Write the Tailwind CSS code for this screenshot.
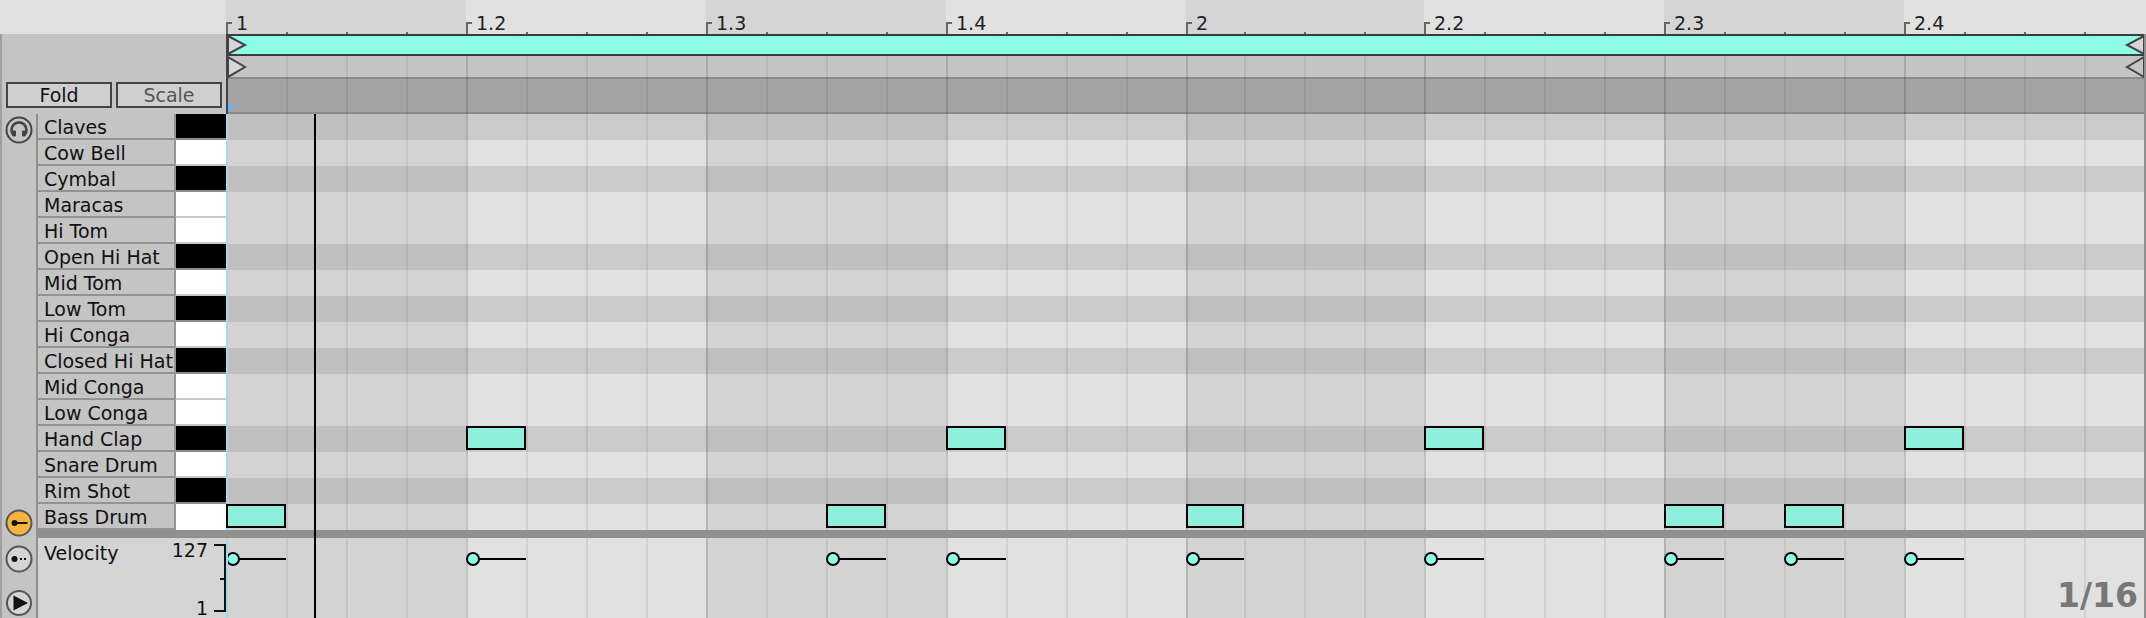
<!DOCTYPE html>
<html lang="en">
<head>
  <meta charset="UTF-8" />
  <title>Drum Rack MIDI clip</title>
  <script src="https://cdn.jsdelivr.net/npm/@tailwindcss/browser@4"></script>
</head>
<body class="bg-[#c4c4c4]">
  <div class="relative w-[2146px] h-[618px] overflow-hidden flex flex-col font-['DejaVu_Sans',sans-serif] text-[#111]">

    <!-- ruler -->
    <div class="flex h-[34px] bg-[#e1e1e1]">
      <div class="w-[226px] shrink-0"></div>
      <div id="ruler" class="relative flex-1"></div>
    </div>

    <!-- loop strips + fold/scale -->
    <div class="flex h-[80px]">
      <div class="w-[226px] shrink-0 border-l-2 border-[#a0a0a0] bg-[#c4c4c4] flex items-end gap-[4px] pl-[4px] pb-[6px]">
        <button class="w-[106px] h-[26px] border-2 border-[#444] bg-[#cfcfcf] text-[19px] leading-[22px] text-[#111]">Fold</button>
        <button class="w-[106px] h-[26px] border-2 border-[#444] bg-[#cfcfcf] text-[19px] leading-[22px] text-[#555]">Scale</button>
      </div>
      <div class="relative flex-1 flex flex-col border-l-2 border-[#444]">
        <div class="relative h-[22px] bg-[#8dffe9] border-y-2 border-[#3d3d3d]"></div>
        <div class="h-[21px] bg-[#c5c5c5]"></div>
        <div class="h-[37px] bg-[#a3a3a3] border-y-2 border-[#8a8a8a]"></div>
        <div id="stripLines" class="absolute inset-0 -left-[2px]"></div>
        <svg class="absolute left-0 top-0" width="24" height="46" viewBox="0 0 24 46">
          <path d="M0 2 L17 11 L0 20 Z" fill="#d6d6d6" stroke="#444" stroke-width="2"/>
          <path d="M0 23 L17 33 L0 43 Z" fill="#d6d6d6" stroke="#444" stroke-width="2"/>
        </svg>
        <svg class="absolute right-0 top-0" width="24" height="46" viewBox="0 0 24 46">
          <path d="M22 2 L5 11 L22 20 Z" fill="#d6d6d6" stroke="#444" stroke-width="2"/>
          <path d="M22 23 L5 33 L22 43 Z" fill="#c5c5c5" stroke="#444" stroke-width="2"/>
        </svg>
        <svg class="absolute left-0 bottom-[2px]" width="8" height="8" viewBox="0 0 8 8">
          <path d="M0 0 H7 L0 8 Z" fill="#5cb8f5"/>
        </svg>
      </div>
    </div>

    <!-- note rows -->
    <div class="flex h-[416px]">
      <div class="w-[38px] shrink-0 border-l-2 border-r-2 border-[#a0a0a0] border-r-[#909090] bg-[#c4c4c4] relative">
        <svg class="absolute left-[3px] top-[2px]" width="28" height="28" viewBox="0 0 28 28" fill="none" stroke="#444">
          <circle cx="14" cy="14" r="12.5" stroke-width="2"/>
          <path d="M8.5 19 A7.5 7.5 0 1 1 19.5 19" stroke-width="2.6"/>
          <rect x="7.5" y="14.5" width="3.5" height="6" rx="1" fill="#444" stroke="none"/>
          <rect x="17" y="14.5" width="3.5" height="6" rx="1" fill="#444" stroke="none"/>
        </svg>
        <svg class="absolute left-[3px] bottom-[-7px]" width="28" height="28" viewBox="0 0 28 28">
          <circle cx="14" cy="14" r="12.5" fill="#f7b23f" stroke="#555" stroke-width="2"/>
          <circle cx="9.5" cy="14" r="3" fill="#111"/>
          <rect x="9.5" y="13" width="13" height="2" fill="#111"/>
        </svg>
      </div>
      <div id="names" class="w-[188px] shrink-0 flex flex-col"></div>
      <div class="relative flex-1">
        <div id="rows" class="flex flex-col h-full"></div>
        <div id="rowOverlay" class="absolute inset-0"></div>
        <div id="notes" class="absolute inset-0"></div>
      </div>
    </div>

    <div class="flex h-[8px]">
      <div class="w-[36px] shrink-0 border-l-2 border-[#a0a0a0] bg-[#c4c4c4]"></div>
      <div class="flex-1 bg-[#909090]"></div>
    </div>

    <!-- velocity lane -->
    <div class="flex flex-1">
      <div class="w-[38px] shrink-0 border-l-2 border-r-2 border-[#a0a0a0] border-r-[#909090] bg-[#c4c4c4] relative">
        <svg class="absolute left-[3px] top-[7px]" width="28" height="28" viewBox="0 0 28 28">
          <circle cx="14" cy="14" r="12.5" fill="#d4d4d4" stroke="#555" stroke-width="2"/>
          <circle cx="9.5" cy="14" r="3" fill="#111"/>
          <rect x="15" y="13" width="2" height="2" fill="#111"/>
          <rect x="19" y="13" width="2" height="2" fill="#111"/>
        </svg>
        <svg class="absolute left-[3px] top-[51px]" width="28" height="28" viewBox="0 0 28 28">
          <circle cx="14" cy="14" r="12" fill="#d4d4d4" stroke="#555" stroke-width="2"/>
          <path d="M8.5 6.5 L23 14 L8.5 21.5 Z" fill="#111"/>
        </svg>
      </div>
      <div class="relative w-[188px] shrink-0 bg-[#d4d4d4] text-[19px]">
        <div class="pl-[6px] pt-[3px] leading-[24px]">Velocity</div>
        <div class="absolute right-[18px] top-[1px] leading-[22px]">127</div>
        <div class="absolute right-[18px] bottom-[-1px] leading-[22px]">1</div>
        <div class="absolute right-0 top-[6px] w-[12px] h-[68px] border-t-2 border-b-2 border-r-2 border-[#111]"></div>
        <div class="absolute right-0 top-[40px] w-[6px] h-[2px] bg-[#111]"></div>
      </div>
      <div class="relative flex-1 bg-[#e1e1e1]">
        <div id="velOverlay" class="absolute inset-0"></div>
        <div id="velocity" class="absolute inset-0"></div>
        <div class="absolute left-0 top-0 bottom-0 w-[2px] bg-[#9fd8f8]"></div>
      </div>
    </div>

    <div class="absolute right-[8px] bottom-[6px] text-[33px] leading-[33px] font-bold text-[#777]">1/16</div>

    <!-- right edge + playhead -->
    <div class="absolute right-0 top-[34px] bottom-0 w-[2px] bg-[#909090]"></div>
    <div class="absolute left-[314px] top-[114px] bottom-0 w-[2px] bg-black"></div>
  </div>

<script>
  const names = ["Claves","Cow Bell","Cymbal","Maracas","Hi Tom","Open Hi Hat","Mid Tom","Low Tom","Hi Conga","Closed Hi Hat","Mid Conga","Low Conga","Hand Clap","Snare Drum","Rim Shot","Bass Drum"];
  const blackRows = [0,2,5,7,9,12,14];
  const notes = [[15,0],[12,4],[15,10],[12,12],[15,16],[12,20],[15,24],[15,26],[12,28]];
  const labels = ["1","1.2","1.3","1.4","2","2.2","2.3","2.4"];

  // the grid loses 2px after the second bar starts
  const pos = n => (n <= 16 ? n * 60 : n * 60 - 2);

  let nameHtml = "", rowHtml = "";
  names.forEach((name, i) => {
    const last = i === names.length - 1;
    const black = blackRows.includes(i);
    nameHtml += `
      <div class="h-[26px] flex">
        <div class="w-[136px] bg-[#c4c4c4] border-b-2 border-[#939393] pl-[6px] text-[19px] leading-[26px] whitespace-nowrap overflow-hidden">${name}</div>
        <div class="w-[2px] bg-[#939393]"></div>
        <div class="w-[50px] flex flex-col ${black ? "bg-[#8c8c8c]" : "bg-[#c8c8c8]"}"><div class="${black ? "bg-black" : "bg-white"} ${last ? "h-[26px]" : "h-[24px]"}"></div></div>
      </div>`;
    rowHtml += `<div class="h-[26px] ${black ? "bg-[#cbcbcb]" : "bg-[#e1e1e1]"}"></div>`;
  });
  document.getElementById("names").innerHTML = nameHtml;
  document.getElementById("rows").innerHTML = rowHtml;

  // bar shading and sixteenth lines
  function lines(from, topClass) {
    let html = "";
    for (let n = from; n < 32; n++) {
      const lineClass = n % 4 === 0 ? "bg-black/[0.14]" : "bg-black/[0.07]";
      html += `<div class="absolute ${topClass} bottom-0 w-[2px] ${lineClass}" style="left:${pos(n)}px"></div>`;
    }
    return html;
  }
  function shade(colorClass) {
    let html = "";
    for (let n = 0; n < 32; n += 8) {
      html += `<div class="absolute top-0 bottom-0 ${colorClass}" style="left:${pos(n)}px;width:${pos(n + 4) - pos(n)}px"></div>`;
    }
    return html;
  }
  document.getElementById("rowOverlay").innerHTML = shade("bg-black/[0.06]") + lines(1, "top-0") + '<div class="absolute left-0 top-0 bottom-0 w-[2px] bg-[#9fd8f8]"></div>';
  document.getElementById("velOverlay").innerHTML = shade("bg-black/[0.06]") + lines(1, "top-0");
  document.getElementById("stripLines").innerHTML = lines(1, "top-[22px]");

  // ruler
  let ruler = shade("bg-[#d5d5d5]");
  for (let n = 0; n < 32; n++) {
    const x = pos(n);
    if (n % 4 === 0) {
      ruler += `<div class="absolute top-[22px] w-[6px] h-[12px] border-l-2 border-t-2 border-[#666]" style="left:${x}px"></div>`;
      ruler += `<div class="absolute top-[12px] text-[19px] leading-[22px] text-[#222]" style="left:${x + 10}px">${labels[n / 4]}</div>`;
    } else {
      ruler += `<div class="absolute bottom-0 w-[2px] h-[2px] bg-[#666]" style="left:${x}px"></div>`;
    }
  }
  document.getElementById("ruler").innerHTML = ruler;

  // notes + velocity stems
  let noteHtml = "", velHtml = "";
  notes.forEach(([row, col]) => {
    const x = pos(col), w = pos(col + 4) - x > 0 ? pos(col + 1) - x : 60;
    noteHtml += `<div class="absolute h-[24px] bg-[#8ef0dc] border-2 border-black" style="left:${x}px;top:${row * 26}px;width:${w}px"></div>`;
    velHtml += `<div class="absolute top-[20px] h-[2px] bg-black" style="left:${x + 7}px;width:${w - 7}px"></div>`;
    velHtml += `<div class="absolute top-[14px] w-[14px] h-[14px] rounded-full bg-[#8dffe9] border-2 border-black" style="left:${x}px"></div>`;
  });
  document.getElementById("notes").innerHTML = noteHtml;
  document.getElementById("velocity").innerHTML = velHtml;
</script>
</body>
</html>
